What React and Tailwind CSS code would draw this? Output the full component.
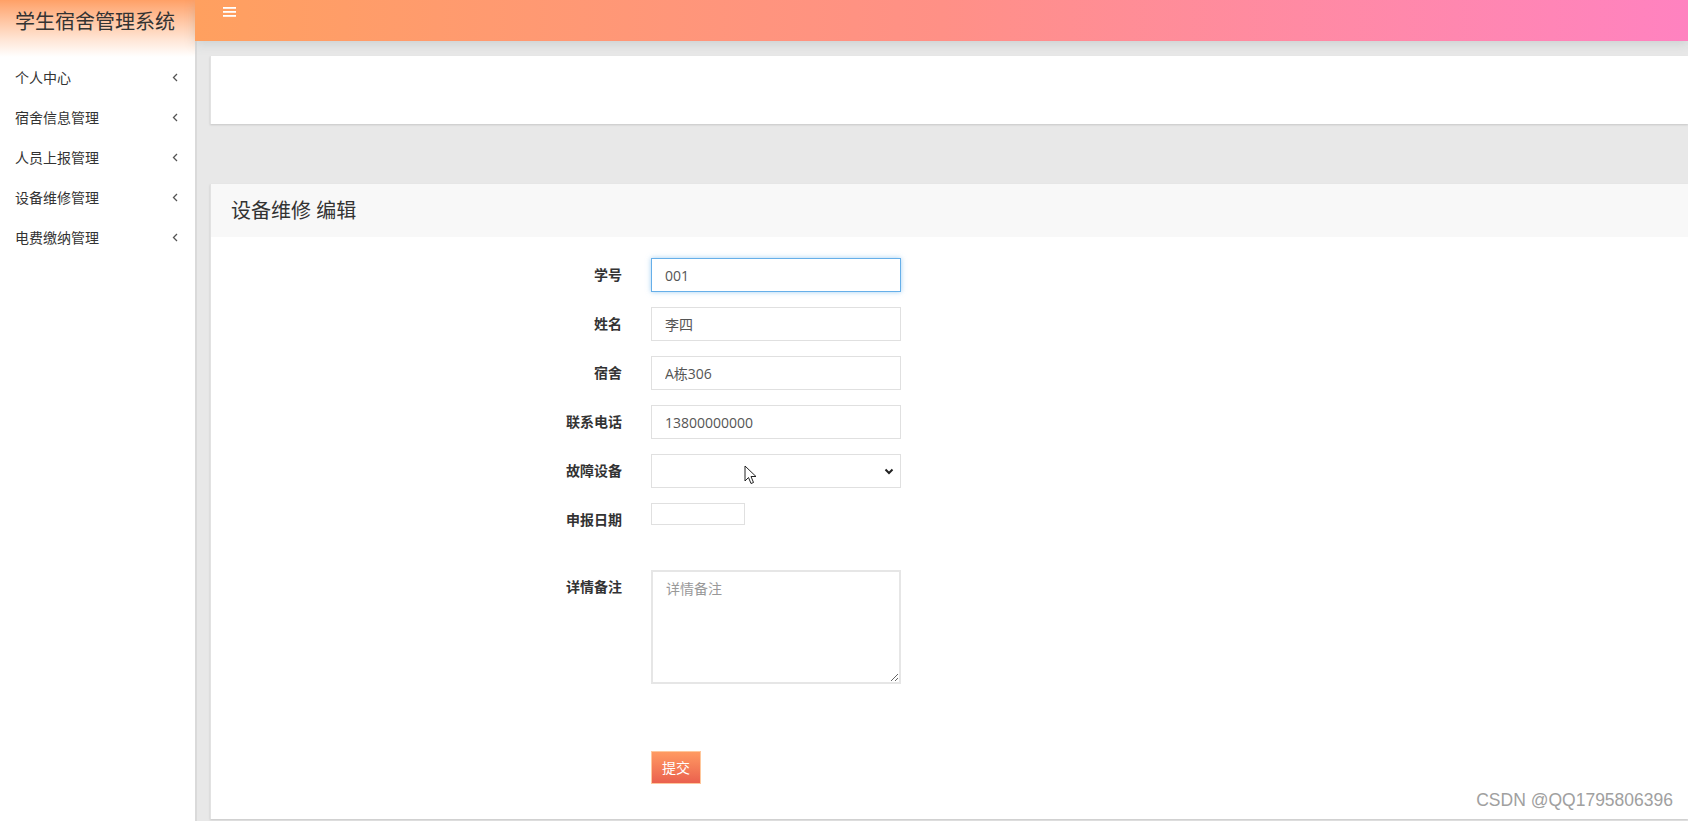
import React from 'react'

const menu = ['个人中心', '宿舍信息管理', '人员上报管理', '设备维修管理', '电费缴纳管理']

const Chevron = () => (
    <svg width="6" height="9" viewBox="0 0 6 9" fill="none">
        <path d="M5 1 L1.5 4.5 L5 8" stroke="#555" strokeWidth="1.3" />
    </svg>
)

const Row = ({ label, children, className = 'mb-[15px]' }) => (
    <div className={`flex items-start ${className}`}>
        <label className="w-[411px] pt-[7px] text-right text-[14px] leading-[20px] font-bold text-[#333]">{label}</label>
        <div className="ml-[29px]">{children}</div>
    </div>
)

const inputCls = 'w-[250px] h-[34px] px-[13px] text-[14px] text-[#555] bg-white border border-[#e0e0e0] outline-none'

const App = () => {
    return (
        <div className="relative flex w-full h-[821px] overflow-hidden bg-[#e8e8e8] font-['Open_Sans','Noto_Sans_CJK_SC',sans-serif]">
            {/* Sidebar */}
            <aside className="w-[195px] shrink-0 bg-white flex flex-col">
                <div className="h-[57px] pl-[15px] pt-[7px] bg-gradient-to-b from-[#ffa066] via-[#ffe6d6] via-70% to-white">
                    <span className="text-[20px] leading-[30px] text-[#333]">学生宿舍管理系统</span>
                </div>
                {menu.map((m) => (
                    <div key={m} className="h-[40px] flex items-center justify-between pl-[15px] pr-[17px] text-[14px] text-[#333]">
                        <span>{m}</span>
                        <Chevron />
                    </div>
                ))}
            </aside>

            {/* Main */}
            <div className="flex-1 flex flex-col min-w-0">
                <header className="relative z-10 h-[41px] shrink-0 bg-gradient-to-r from-[#ffa05f] via-[#ff9086] to-[#ff82c0] shadow-[0_3px_10px_rgba(120,140,140,0.25)]">
                    <svg className="absolute left-[28px] top-[7px]" width="13" height="10" viewBox="0 0 13 10">
                        <rect x="0" y="0" width="13" height="1.8" fill="#fff" />
                        <rect x="0" y="4" width="13" height="1.8" fill="#fff" />
                        <rect x="0" y="8" width="13" height="1.8" fill="#fff" />
                    </svg>
                </header>

                <div className="flex-1 flex flex-col border-l-2 border-[#dadada] pl-[13px] pt-[15px]">
                    <div className="h-[68px] bg-white shadow-[0_1px_2px_rgba(0,0,0,0.15)] border-l border-[#e2e2e2]"></div>

                    <div className="mt-[60px] bg-white shadow-[0_1px_2px_rgba(0,0,0,0.15)] border-l border-[#e2e2e2]">
                        <div className="h-[53px] bg-[#f8f8f8] pl-[20px] flex items-center">
                            <h2 className="text-[20px] text-[#333]">设备维修 编辑</h2>
                        </div>

                        <form className="pt-[21px] pb-[35px]">
                            <Row label="学号">
                                <input className={`${inputCls} !border-[#66afe9] shadow-[0_0_5px_rgba(102,175,233,0.6)]`} defaultValue="001" />
                            </Row>
                            <Row label="姓名">
                                <input className={inputCls} defaultValue="李四" />
                            </Row>
                            <Row label="宿舍">
                                <input className={inputCls} defaultValue="A栋306" />
                            </Row>
                            <Row label="联系电话">
                                <input className={inputCls} defaultValue="13800000000" />
                            </Row>
                            <Row label="故障设备">
                                <div className={`${inputCls} relative flex items-center justify-end pr-[6px]`}>
                                    <svg width="10" height="7" viewBox="0 0 10 7" fill="none">
                                        <path d="M1.5 1.5 L5 5 L8.5 1.5" stroke="#222" strokeWidth="2" />
                                    </svg>
                                </div>
                            </Row>
                            <Row label="申报日期" className="mb-[40px]">
                                <div className="w-[94px] h-[22px] bg-white border border-[#e0e0e0]"></div>
                            </Row>
                            <Row label="详情备注" className="mb-[67px]">
                                <textarea
                                    className="block w-[250px] h-[114px] px-[13px] py-[6px] text-[14px] text-[#555] border-2 border-[#e6e6e6] outline-none placeholder:text-[#999]"
                                    placeholder="详情备注"
                                ></textarea>
                            </Row>
                            <div className="ml-[440px]">
                                <button type="button" className="w-[50px] h-[33px] border border-[#ffc79c] bg-gradient-to-b from-[#ff9a62] to-[#ea604e] text-white text-[14px]">提交</button>
                            </div>
                        </form>
                    </div>
                </div>
            </div>

            {/* mouse cursor */}
            <svg className="absolute left-[744px] top-[465px]" width="14" height="20" viewBox="0 0 14 20">
                <path d="M1 1 L1 16 L4.5 12.5 L7 18.5 L9.5 17.5 L7 11.5 L12 11.5 Z" fill="#fff" stroke="#222" strokeWidth="1" strokeLinejoin="round" />
            </svg>

            {/* watermark */}
            <div className="absolute right-[15px] bottom-[8px] text-[17.5px] text-[#a0a0a0] font-['Liberation_Sans',sans-serif]">CSDN @QQ1795806396</div>
        </div>
    )
}

export default App
